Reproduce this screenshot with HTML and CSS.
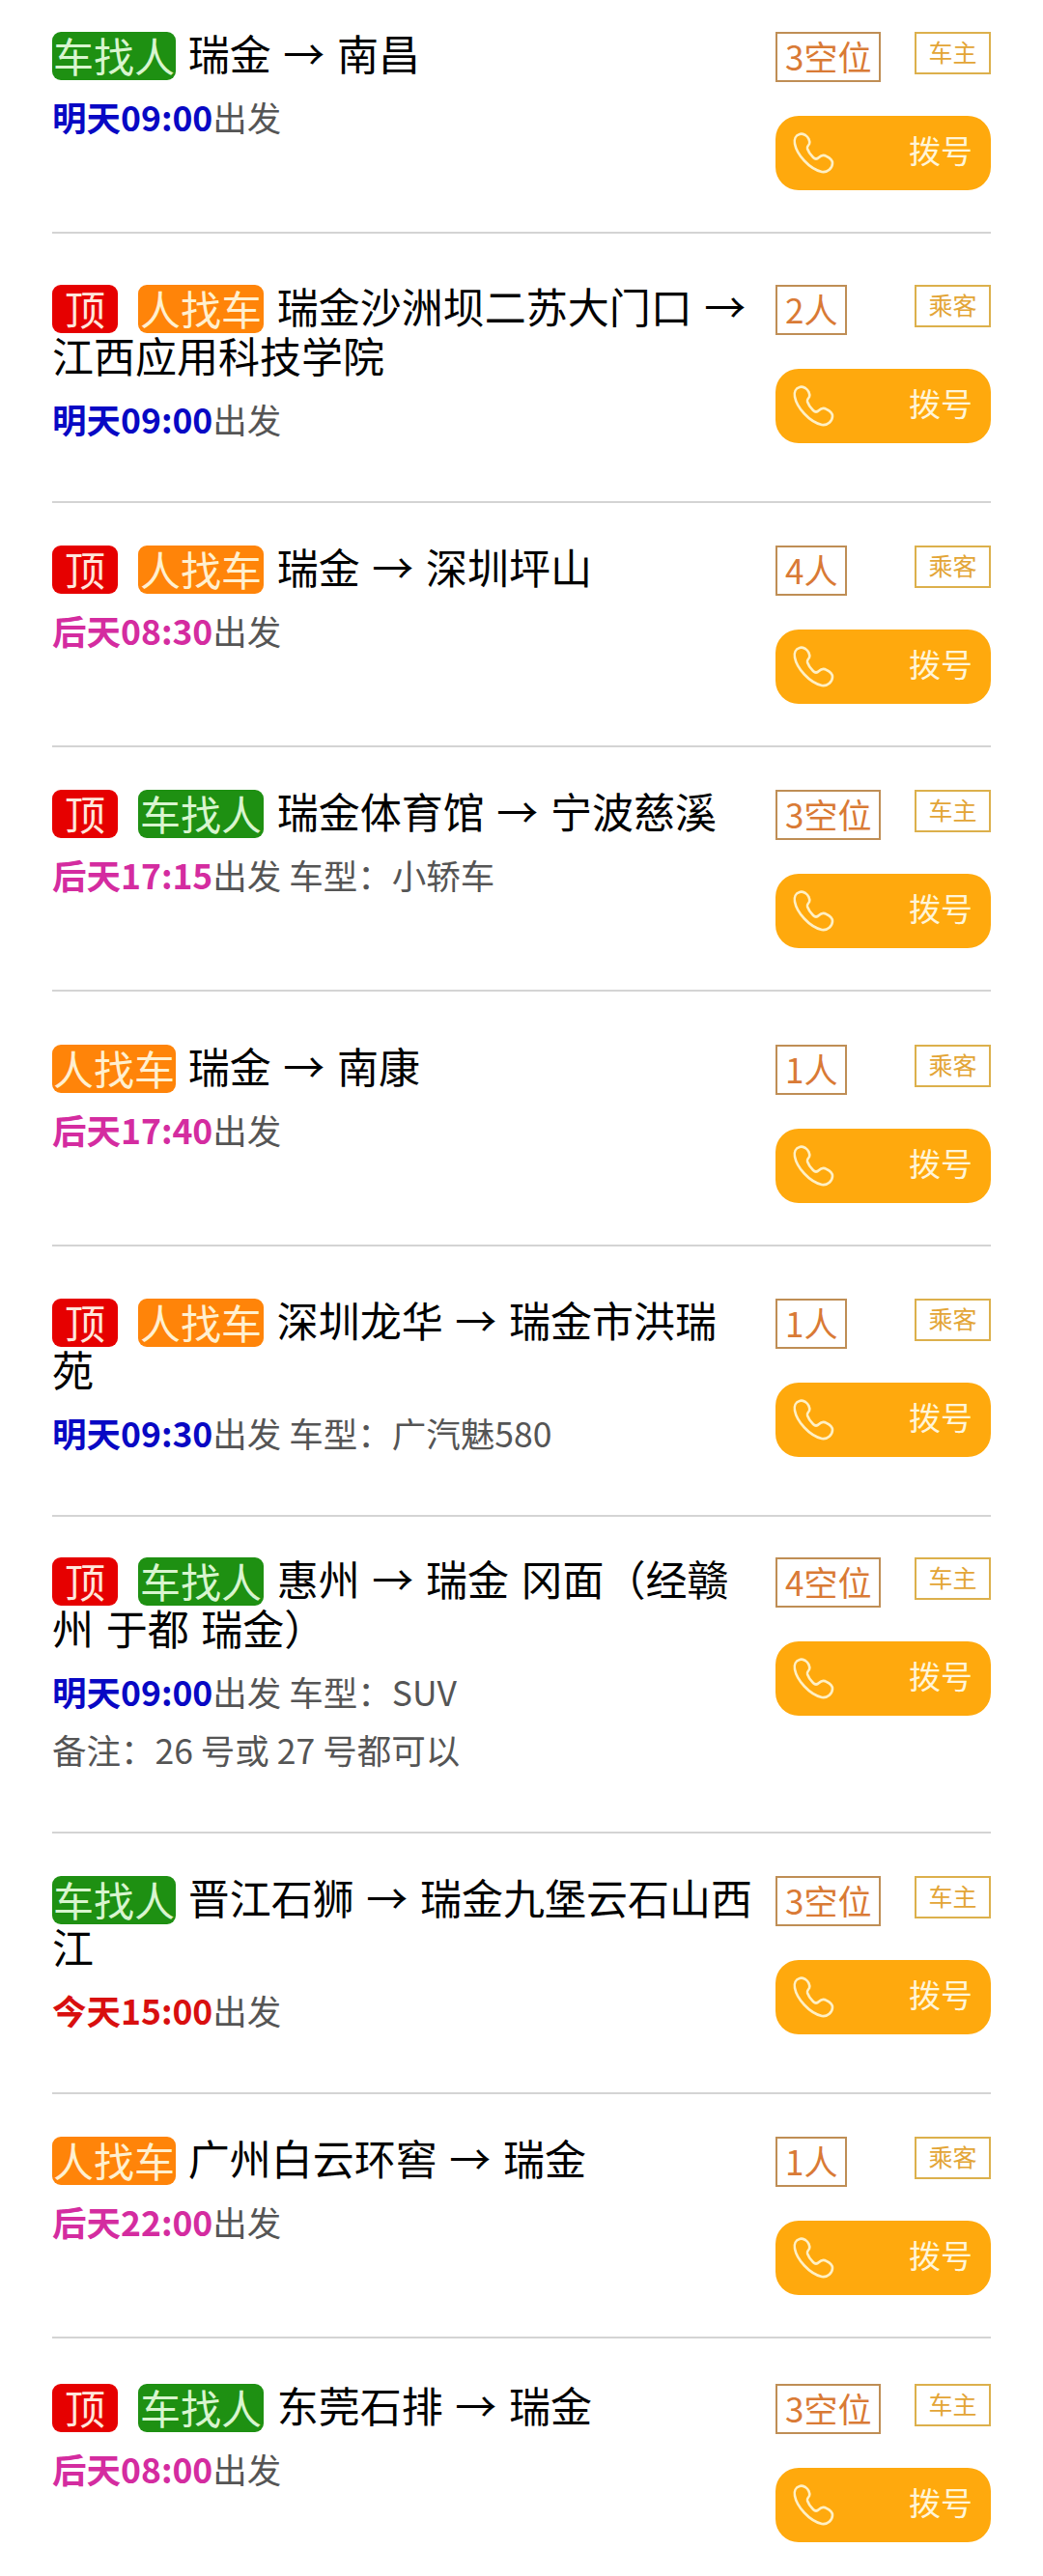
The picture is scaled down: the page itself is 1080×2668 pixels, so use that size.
FILE: index.html
```html
<!DOCTYPE html>
<html lang="zh-CN">
<head>
    <meta charset="UTF-8">
    <meta name="viewport" content="width=device-width, initial-scale=1.0">
    <title>拼车列表</title>
    <link rel="stylesheet" href="styles.css">
</head>
<body>
    <svg class="icon-defs" width="0" height="0">
        <symbol id="phone" viewBox="0 0 46 46">
            <path d="M8 3C4 4 2 8 3 13C5 24 18 39 31 42C37 43 42 38 42 33C42 30 40 28 36 26C33 24 30 25 28 27C26 29 24 29 22 27C19 24 17 21 16 18C15 16 17 15 18 13C19 10 17 6 14 4C12 3 10 2 8 3Z"/>
        </symbol>
    </svg>

    <div class="list">
        <div class="item pad-33">
            <div class="info">
                <div class="title"><span class="tag green">车找人</span> 瑞金 → 南昌</div>
                <div class="sub"><b class="blue">明天09:00</b>出发</div>
            </div>
            <div class="side">
                <div class="side-top"><span class="seats">3空位</span><span class="role">车主</span></div>
                <a class="call"><svg class="phone"><use href="#phone"/></svg><span>拨号</span></a>
            </div>
        </div>
        <div class="item pad-53">
            <div class="info">
                <div class="title"><span class="tag red">顶</span><span class="tag orange">人找车</span> 瑞金沙洲坝二苏大门口 → 江西应用科技学院</div>
                <div class="sub"><b class="blue">明天09:00</b>出发</div>
            </div>
            <div class="side">
                <div class="side-top"><span class="seats">2人</span><span class="role">乘客</span></div>
                <a class="call"><svg class="phone"><use href="#phone"/></svg><span>拨号</span></a>
            </div>
        </div>
        <div class="item">
            <div class="info">
                <div class="title"><span class="tag red">顶</span><span class="tag orange">人找车</span> 瑞金 → 深圳坪山</div>
                <div class="sub"><b class="pink">后天08:30</b>出发</div>
            </div>
            <div class="side">
                <div class="side-top"><span class="seats">4人</span><span class="role">乘客</span></div>
                <a class="call"><svg class="phone"><use href="#phone"/></svg><span>拨号</span></a>
            </div>
        </div>
        <div class="item">
            <div class="info">
                <div class="title"><span class="tag red">顶</span><span class="tag green">车找人</span> 瑞金体育馆 → 宁波慈溪</div>
                <div class="sub"><b class="pink">后天17:15</b>出发 车型：小轿车</div>
            </div>
            <div class="side">
                <div class="side-top"><span class="seats">3空位</span><span class="role">车主</span></div>
                <a class="call"><svg class="phone"><use href="#phone"/></svg><span>拨号</span></a>
            </div>
        </div>
        <div class="item pad-55">
            <div class="info">
                <div class="title"><span class="tag orange">人找车</span> 瑞金 → 南康</div>
                <div class="sub"><b class="pink">后天17:40</b>出发</div>
            </div>
            <div class="side">
                <div class="side-top"><span class="seats">1人</span><span class="role">乘客</span></div>
                <a class="call"><svg class="phone"><use href="#phone"/></svg><span>拨号</span></a>
            </div>
        </div>
        <div class="item pad-54">
            <div class="info">
                <div class="title"><span class="tag red">顶</span><span class="tag orange">人找车</span> 深圳龙华 → 瑞金市洪瑞苑</div>
                <div class="sub"><b class="blue">明天09:30</b>出发 车型：广汽魅580</div>
            </div>
            <div class="side">
                <div class="side-top"><span class="seats">1人</span><span class="role">乘客</span></div>
                <a class="call"><svg class="phone"><use href="#phone"/></svg><span>拨号</span></a>
            </div>
        </div>
        <div class="item pad-42">
            <div class="info">
                <div class="title"><span class="tag red">顶</span><span class="tag green">车找人</span> 惠州 → 瑞金 冈面（经赣州 于都 瑞金）</div>
                <div class="sub"><b class="blue">明天09:00</b>出发 车型：SUV</div>
                <div class="note">备注：26 号或 27 号都可以</div>
            </div>
            <div class="side">
                <div class="side-top"><span class="seats">4空位</span><span class="role">车主</span></div>
                <a class="call"><svg class="phone"><use href="#phone"/></svg><span>拨号</span></a>
            </div>
        </div>
        <div class="item">
            <div class="info">
                <div class="title"><span class="tag green">车找人</span> 晋江石狮 → 瑞金九堡云石山西江</div>
                <div class="sub"><b class="today">今天15:00</b>出发</div>
            </div>
            <div class="side">
                <div class="side-top"><span class="seats">3空位</span><span class="role">车主</span></div>
                <a class="call"><svg class="phone"><use href="#phone"/></svg><span>拨号</span></a>
            </div>
        </div>
        <div class="item">
            <div class="info">
                <div class="title"><span class="tag orange">人找车</span> 广州白云环窖 → 瑞金</div>
                <div class="sub"><b class="pink">后天22:00</b>出发</div>
            </div>
            <div class="side">
                <div class="side-top"><span class="seats">1人</span><span class="role">乘客</span></div>
                <a class="call"><svg class="phone"><use href="#phone"/></svg><span>拨号</span></a>
            </div>
        </div>
        <div class="item pad-47">
            <div class="info">
                <div class="title"><span class="tag red">顶</span><span class="tag green">车找人</span> 东莞石排 → 瑞金</div>
                <div class="sub"><b class="pink">后天08:00</b>出发</div>
            </div>
            <div class="side">
                <div class="side-top"><span class="seats">3空位</span><span class="role">车主</span></div>
                <a class="call"><svg class="phone"><use href="#phone"/></svg><span>拨号</span></a>
            </div>
        </div>
    </div>
</body>
</html>
```

FILE: styles.css
```css
body {
    margin: 0;
    background: #fff;
    font-family: "Noto Sans CJK SC", "Noto Sans", sans-serif;
    color: #000;
}
.icon-defs {
    display: block;
    height: 0;
}
.list {
    padding: 0 54px;
}
.item {
    display: flex;
    align-items: flex-start;
    justify-content: space-between;
    padding: 44px 0 43px;
    border-bottom: 2px solid #d4d4d4;
}
.item:last-child {
    border-bottom: none;
}
/* the rows are not evenly spaced in the list */
.pad-33 {
    padding-top: 33px;
}
.pad-42 {
    padding-top: 42px;
}
.pad-47 {
    padding-top: 47px;
}
.pad-53 {
    padding-top: 53px;
}
.pad-54 {
    padding-top: 54px;
}
.pad-55 {
    padding-top: 55px;
}
.info {
    width: 728px;
    padding-bottom: 17px;
}
.title {
    margin-top: -4px;
    font-size: 43px;
    line-height: 51px;
    word-spacing: 3px;
}
.tag {
    display: inline-block;
    vertical-align: top;
    padding: 0 1px;
    height: 50px;
    margin-top: 4px;
    margin-bottom: -4px;
    font-size: 42px;
    line-height: 48px;
    border-radius: 9px;
    word-spacing: 0;
    color: #d8f5cf;
}
.tag.red {
    background: #e60000;
    padding: 0 13px;
    margin-right: 21px;
    color: #ffe6dc;
}
.tag.red + .tag {
    padding: 0 2px;
    margin-right: 1px;
}
.tag.green {
    background: #1e9012;
}
.tag.orange {
    background: #ff8409;
    color: #fff0d0;
}
.sub {
    margin-top: 16px;
    font-size: 35.5px;
    line-height: 50px;
    color: #555;
}
.note {
    margin-top: 10px;
    font-size: 35.5px;
    line-height: 50px;
    color: #555;
}
.blue {
    color: #0808c4;
}
.pink {
    color: #d42ca0;
}
.today {
    color: #d80f0f;
}
.side {
    width: 223px;
    flex-shrink: 0;
}
.side-top {
    display: flex;
    justify-content: space-between;
    align-items: flex-start;
    height: 52px;
}
.seats {
    box-sizing: border-box;
    height: 52px;
    line-height: 46px;
    padding: 0 8px;
    border: 2px solid #bf8e55;
    font-size: 35px;
    color: #d97a35;
}
.role {
    box-sizing: border-box;
    width: 79px;
    height: 44px;
    line-height: 36px;
    text-align: center;
    border: 2px solid #dcb04c;
    font-size: 25px;
    color: #e3a536;
}
.call {
    display: flex;
    align-items: center;
    justify-content: space-between;
    height: 77px;
    margin-top: 35px;
    padding: 0 19px 0 17px;
    border-radius: 24px;
    background: #ffa90d;
    color: #fff5d8;
    font-size: 33px;
}
.call span {
    margin-bottom: 8px;
}
.phone {
    width: 46px;
    height: 46px;
    fill: none;
    stroke: #fff0c4;
    stroke-width: 2.6;
}
```
